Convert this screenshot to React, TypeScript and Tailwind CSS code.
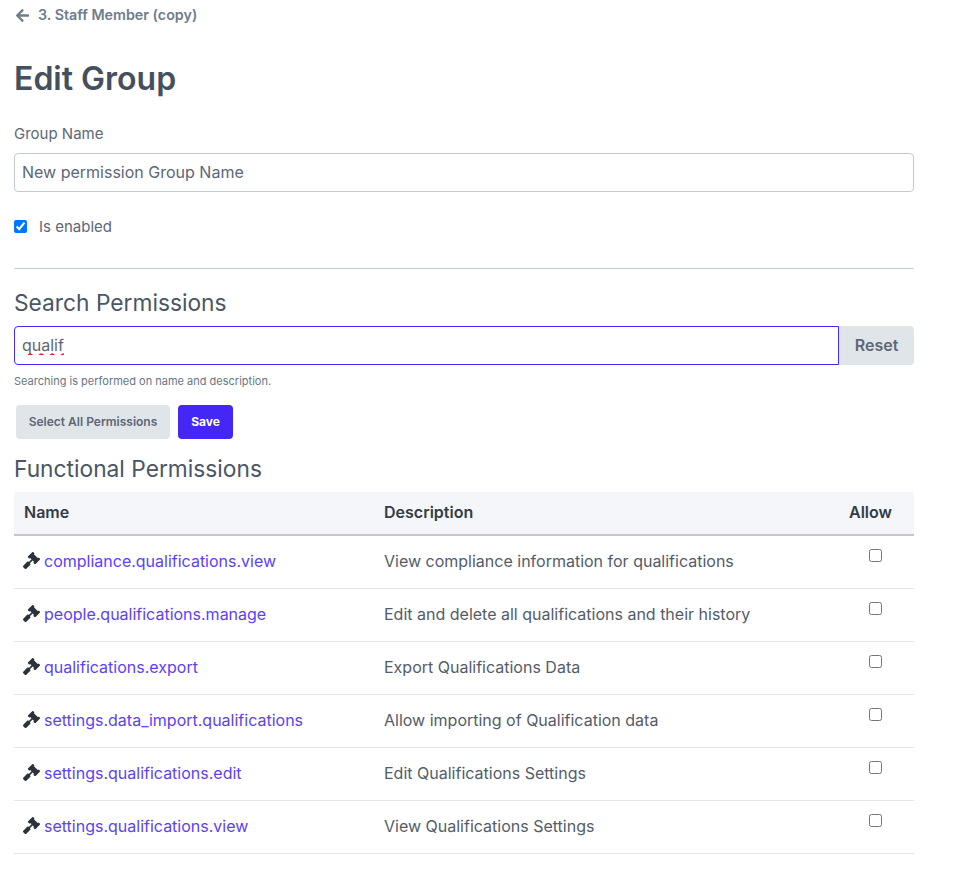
import React from "react";
import { FaArrowLeft, FaGavel } from "react-icons/fa";

const permissions = [
  { name: "compliance.qualifications.view", description: "View compliance information for qualifications" },
  { name: "people.qualifications.manage", description: "Edit and delete all qualifications and their history" },
  { name: "qualifications.export", description: "Export Qualifications Data" },
  { name: "settings.data_import.qualifications", description: "Allow importing of Qualification data" },
  { name: "settings.qualifications.edit", description: "Edit Qualifications Settings" },
  { name: "settings.qualifications.view", description: "View Qualifications Settings" },
];

const App = () => {
  return (
    <div className="w-[960px] h-[872px] overflow-hidden bg-white pl-[14px] font-['Inter',sans-serif] text-[16px] text-[#3e4b5b]">
      <div className="w-[900px]">
        {/* Back link */}
        <a className="flex items-center h-[30px] pl-[1px] text-[14.3px] font-semibold text-[#6f7c8c]">
          <FaArrowLeft className="w-[15px] h-[15px] mr-[8px] text-[#6f7c8c]" />
          3. Staff Member (copy)
        </a>

        <h1 className="mt-[14px] h-[70px] text-[32px] leading-[70px] font-semibold text-[#44505e]">Edit Group</h1>

        {/* Group form */}
        <label className="block mt-[8px] h-[24px] leading-[24px] text-[15px] text-[#5c6775]">Group Name</label>
        <input
          readOnly
          value="New permission Group Name"
          className="block mt-[7px] w-full h-[39px] pl-[7px] pr-2 pb-[2px] border border-[#c2cad4] rounded-[4px] text-[16px] text-[#5c6775] outline-none"
        />

        <div className="flex items-center mt-[24px] h-[22px]">
          <input type="checkbox" readOnly checked className="w-[13px] h-[13px] m-0 -translate-y-px accent-[#0075ff]" />
          <span className="ml-3 text-[15px] text-[#5c6775]">Is enabled</span>
        </div>

        <hr className="mt-[30px] border-t border-[#c2d0d8]" />

        {/* Search */}
        <h2 className="mt-[19px] h-[30px] text-[22.75px] leading-[30px] text-[#4a5664]">Search Permissions</h2>
        <div className="flex mt-[8px] h-[39px]">
          <input
            readOnly
            value="qualif"
            className="flex-1 h-full pl-[7px] pr-2 pb-[2px] border border-[#4527f5] rounded-l-[4px] text-[16px] text-[#5c6775] outline-none underline decoration-wavy decoration-[#e02020] decoration-2 underline-offset-2 [text-decoration-skip-ink:none]"
          />
          <button className="w-[75px] h-full pb-[2px] bg-[#e0e5e9] rounded-r-[4px] text-[16px] font-semibold text-[#5c6775]">
            Reset
          </button>
        </div>
        <p className="mt-[8px] h-[17px] text-[11px] leading-[16px] text-[#6a7583]">
          Searching is performed on name and description.
        </p>

        <div className="flex mt-[15px] ml-[2px] gap-2">
          <button className="w-[154px] h-[34px] bg-[#e0e5e9] rounded-[4px] text-[12px] font-semibold text-[#5c6775]">
            Select All Permissions
          </button>
          <button className="w-[55px] h-[34px] bg-[#4527f5] rounded-[4px] text-[12px] font-bold text-white">
            Save
          </button>
        </div>

        <h2 className="mt-[15px] h-[30px] text-[22.75px] leading-[30px] text-[#4a5664]">Functional Permissions</h2>

        {/* Permissions table */}
        <table className="mt-[8px] w-full border-collapse table-fixed">
          <thead>
            <tr className="h-[43px] bg-[#f5f6fa] border-b-2 border-[#c2c8d2] text-left text-[#333b45]">
              <th className="w-[360px] pl-[10px] pb-[2px] font-semibold">Name</th>
              <th className="w-[440px] pl-[10px] pb-[2px] font-semibold">Description</th>
              <th className="pl-[35px] pb-[2px] font-semibold">Allow</th>
            </tr>
          </thead>
          <tbody>
            {permissions.map((permission) => (
              <tr key={permission.name} className="h-[53px] border-b border-[#e2e5ea]">
                <td className="pl-[9px] pb-[2px]">
                  <div className="flex items-center">
                    <FaGavel className="w-[17px] h-[17px] mr-[4px] text-[#2b323a]" />
                    <a className="text-[#5c42f6]">{permission.name}</a>
                  </div>
                </td>
                <td className="pl-[10px] pb-[2px] text-[#535c69]">{permission.description}</td>
                <td className="pl-[55px] align-top pt-[13px]">
                  <input type="checkbox" readOnly className="block w-[13px] h-[13px] m-0" />
                </td>
              </tr>
            ))}
          </tbody>
        </table>
      </div>
    </div>
  );
};

export default App;
